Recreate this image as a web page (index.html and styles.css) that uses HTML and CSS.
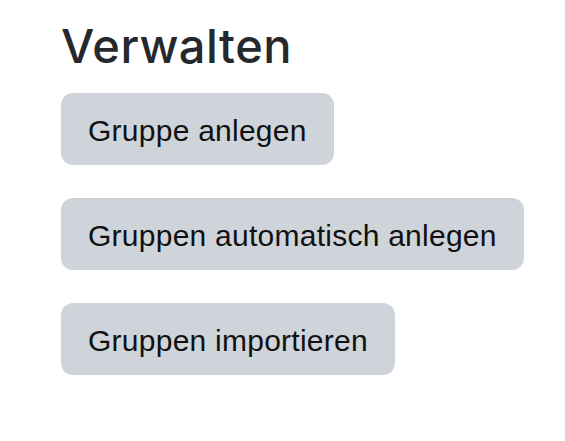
FILE: index.html
```html
<!DOCTYPE html>
<html lang="de">
<head>
<meta charset="utf-8">
<title>Verwalten</title>
<link rel="stylesheet" href="styles.css">
</head>
<body>
<main class="panel">
  <h2 class="panel-title">Verwalten</h2>
  <div class="actions">
    <a class="btn" href="#">Gruppe anlegen</a>
    <a class="btn" href="#">Gruppen automatisch anlegen</a>
    <a class="btn" href="#">Gruppen importieren</a>
  </div>
</main>
</body>
</html>
```
FILE: styles.css
```css
html, body {
  margin: 0;
  padding: 0;
  background: #ffffff;
}
body {
  font-family: "Liberation Sans", Arial, sans-serif;
  color: #1d2125;
}
.panel {
  padding: 18px 0 0 61px;
}
.panel-title {
  margin: 0;
  font-family: Inter, "Liberation Sans", sans-serif;
  font-size: 47px;
  font-weight: 500;
  line-height: 56px;
  letter-spacing: 0.5px;
  color: #25282d;
}
.actions {
  margin-top: 19px;
  display: flex;
  flex-direction: column;
  align-items: flex-start;
  gap: 33px;
}
.btn {
  display: inline-block;
  box-sizing: border-box;
  height: 72px;
  padding: 20px 27px 16px;
  font-size: 30px;
  line-height: 36px;
  letter-spacing: 0.25px;
  color: #111111;
  text-decoration: none;
  background: #ced4da;
  border-radius: 12px;
  white-space: nowrap;
}
```
